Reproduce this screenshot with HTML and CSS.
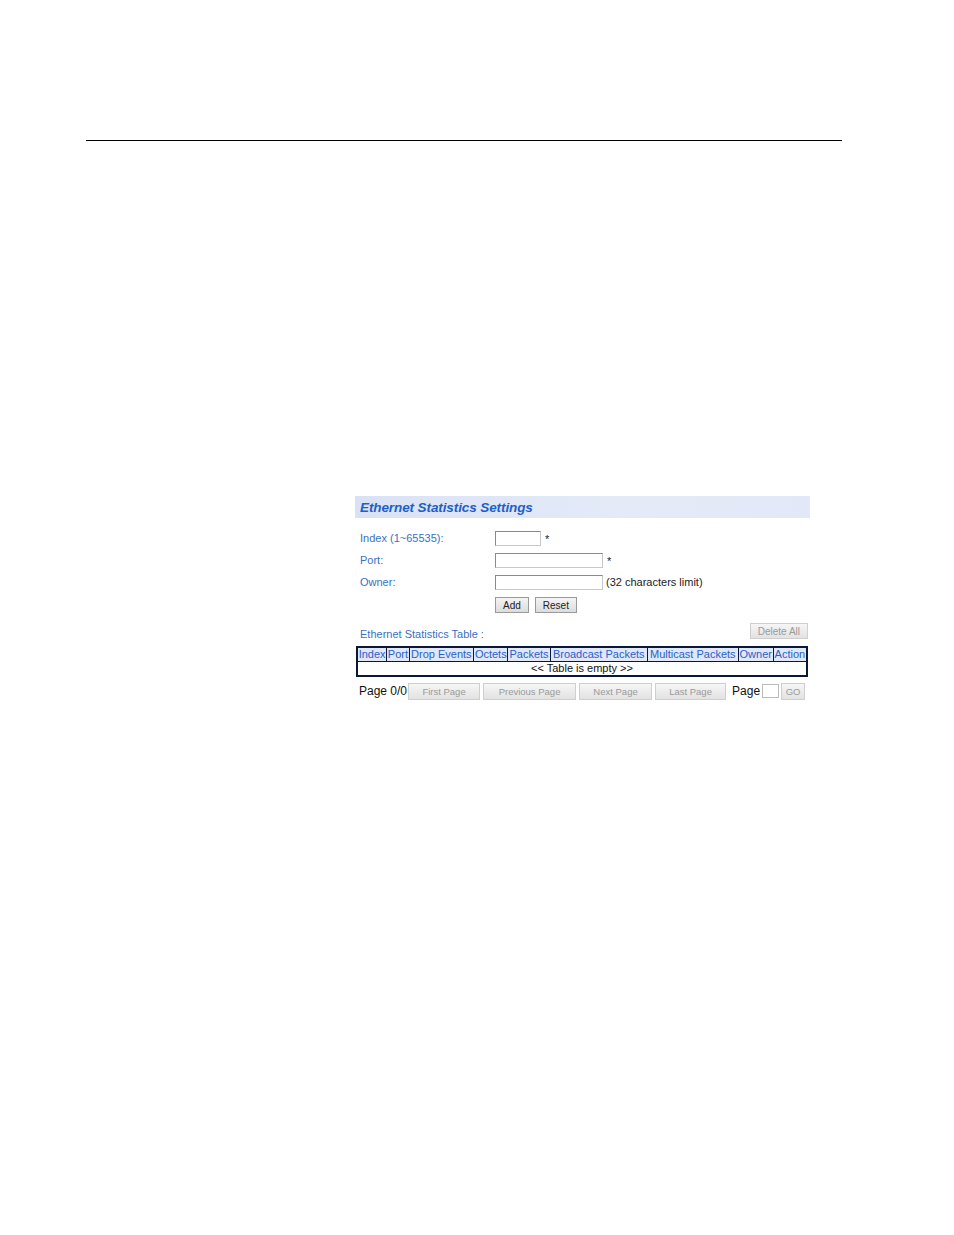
FILE: index.html
```html
<!DOCTYPE html>
<html>
<head>
<meta charset="utf-8">
<link rel="stylesheet" href="styles.css">
</head>
<body>
<div class="page">
  <div class="rule"></div>
  <div class="panel">
    <div class="title-bar"><span class="title">Ethernet Statistics Settings</span></div>
    <div class="form">
      <div class="row">
        <span class="label">Index (1~65535):</span>
        <span class="field"><span class="input w-s"></span><span class="req">*</span></span>
      </div>
      <div class="row">
        <span class="label">Port:</span>
        <span class="field"><span class="input w-l"></span><span class="req">*</span></span>
      </div>
      <div class="row">
        <span class="label">Owner:</span>
        <span class="field"><span class="input w-l"></span><span class="note">(32 characters limit)</span></span>
      </div>
      <div class="row btn-row">
        <span class="label"></span>
        <span class="field"><span class="btn">Add</span><span class="btn">Reset</span></span>
      </div>
    </div>
    <div class="table-head">
      <span class="label">Ethernet Statistics Table :</span>
      <span class="btn disabled">Delete All</span>
    </div>
    <table class="stats">
      <thead>
        <tr>
          <th>Index</th><th>Port</th><th>Drop Events</th><th>Octets</th><th>Packets</th><th>Broadcast Packets</th><th>Multicast Packets</th><th>Owner</th><th>Action</th>
        </tr>
      </thead>
      <tbody>
        <tr><td colspan="9">&lt;&lt; Table is empty &gt;&gt;</td></tr>
      </tbody>
    </table>
    <div class="pager">
      <span class="ptext">Page 0/0</span>
      <span class="btn disabled pb-first">First Page</span>
      <span class="btn disabled pb-prev">Previous Page</span>
      <span class="btn disabled pb-next">Next Page</span>
      <span class="btn disabled pb-last">Last Page</span>
      <span class="ptext pg">Page</span>
      <span class="input pg-input"></span>
      <span class="btn disabled pb-go">GO</span>
    </div>
  </div>
</div>
</body>
</html>
```

FILE: styles.css
```css
html, body {
  margin: 0;
  padding: 0;
  background: #ffffff;
}
body {
  font-family: "Liberation Sans", Arial, sans-serif;
  width: 954px;
  height: 1235px;
}
.page {
  padding-top: 140px;
}
.rule {
  margin-left: 86px;
  width: 756px;
  height: 1px;
  background: #000;
}
.panel {
  margin-top: 355px;
  margin-left: 355px;
  width: 455px;
}
.title-bar {
  height: 22px;
  background: linear-gradient(to right, #d9e2f5 0%, #e4eaf8 60%, #e2e8f7 100%);
  display: flex;
  align-items: center;
  padding-left: 5px;
}
.title {
  font-weight: bold;
  font-style: italic;
  font-size: 13.5px;
  color: #1d5fc9;
  letter-spacing: -0.1px;
}
.form {
  padding-top: 9px;
}
.row {
  display: flex;
  align-items: center;
  height: 22px;
}
.label {
  width: 140px;
  padding-left: 5px;
  box-sizing: border-box;
  font-size: 11px;
  color: #3a6fc4;
}
.field {
  display: flex;
  align-items: center;
  font-size: 11px;
  color: #222;
}
.input {
  display: inline-block;
  height: 13px;
  border: 1px solid #8a8a8a;
  border-right-color: #c8c8c8;
  border-bottom-color: #c8c8c8;
  background: #fff;
}
.w-s { width: 44px; }
.w-l { width: 106px; }
.req {
  margin-left: 4px;
  align-self: flex-start;
  margin-top: 2px;
}
.note {
  margin-left: 3px;
}
.btn-row {
  height: 24px;
}
.btn {
  display: inline-flex;
  align-items: center;
  justify-content: center;
  height: 14px;
  padding: 0 7px;
  font-size: 10px;
  color: #222;
  background: linear-gradient(#f4f4f4, #dcdcdc);
  border: 1px solid #9a9a9a;
  margin-right: 6px;
}
.btn.disabled {
  color: #9a9a9a;
  background: linear-gradient(#f6f6f6, #e2e2e2);
  border: 1px solid #cfcfcf;
  margin-right: 0;
}
.table-head {
  display: flex;
  justify-content: space-between;
  align-items: center;
  margin-top: 4px;
  height: 20px;
  padding-right: 2px;
}
.table-head .label {
  width: auto;
  margin-top: 6px;
}
.table-head .btn {
  height: 14px;
  padding: 0 7px;
}
.stats {
  margin-top: 5px;
  margin-left: 1px;
  width: 452px;
  border-collapse: collapse;
  border: 2px solid #0a1836;
  font-size: 11px;
}
.stats th {
  font-weight: normal;
  color: #2a62c8;
  background: #dfe7f8;
  border: 1px solid #0a1836;
  padding: 0;
  height: 13px;
  line-height: 13px;
  white-space: nowrap;
  text-align: center;
}
.stats td {
  text-align: center;
  color: #111;
  height: 13px;
  line-height: 13px;
  padding: 0;
}
.pager {
  display: flex;
  align-items: center;
  margin-top: 5px;
  height: 18px;
}
.ptext {
  font-size: 12px;
  color: #111;
  padding-left: 4px;
}
.pager .btn {
  height: 15px;
  font-size: 9.5px;
  padding: 0;
}
.pb-first { width: 70px; margin-left: 1px; }
.pb-prev { width: 91px; margin-left: 3px; }
.pb-next { width: 71px; margin-left: 3px; }
.pb-last { width: 69px; margin-left: 3px; }
.pg { padding-left: 6px; }
.pg-input {
  width: 15px;
  margin-left: 2px;
  height: 12px;
  border-color: #bbb;
}
.pb-go { width: 22px; margin-left: 2px; }
```
